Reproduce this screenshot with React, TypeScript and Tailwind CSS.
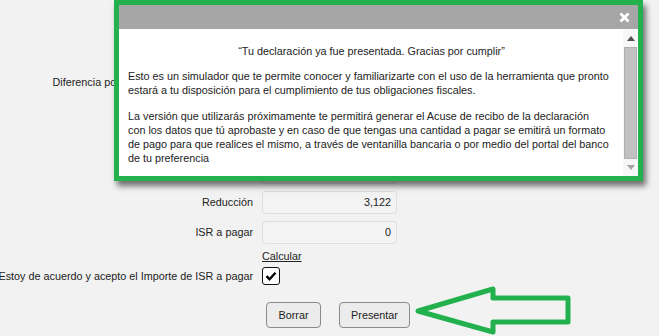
import React from "react";

const rows = [
  { id: "dif", label: "Diferencia por pagar del ejercicio anterior:", value: "" },
  { id: "r2", label: "", value: "" },
  { id: "r3", label: "", value: "" },
  { id: "r4", label: "", value: "" },
  { id: "red", label: "Reducción", value: "3,122" },
  { id: "isr", label: "ISR a pagar", value: "0" },
];

export default function App() {
  return (
    <div
      className="relative w-[659px] h-[336px] overflow-hidden bg-[#f2f2f2] text-[10.8px] text-[#222]"
      style={{ fontFamily: '"Liberation Sans", Arial, sans-serif' }}
    >
      {/* Form */}
      <div className="pt-[71px] grid grid-cols-[253px_auto] gap-x-[9px] gap-y-[7px] w-fit">
        {rows.map((r) => (
          <React.Fragment key={r.id}>
            <div className="flex items-center justify-end h-[23px] whitespace-nowrap">{r.label}</div>
            <div className="w-[135px] h-[23px] rounded-[3px] border border-[#dedede] bg-[#f3f3f3] flex items-center justify-end pr-[5px]">
              {r.value}
            </div>
          </React.Fragment>
        ))}
        <div />
        <div className="mt-[-2px] h-[14px] leading-[14px] underline">Calcular</div>
        <div className="flex items-center justify-end h-[18px] whitespace-nowrap mt-[-3px]">
          Estoy de acuerdo y acepto el Importe de ISR a pagar
        </div>
        <div className="mt-[-3px] w-[18px] h-[18px] rounded-[3px] border-[1.5px] border-[#111] bg-white flex items-center justify-center">
          <svg width="12" height="10" viewBox="0 0 12 10">
            <path d="M1.5 5.2 L4.5 8.2 L10.5 1.8" fill="none" stroke="#000" strokeWidth="2.4" />
          </svg>
        </div>
        <div />
        <div className="mt-[10px] ml-[4px] flex gap-[18px]">
          <button className="w-[55px] h-[26px] rounded-[4px] border border-[#8a8a8a] bg-[#ececec] text-[10.8px] text-[#222]">
            Borrar
          </button>
          <button className="w-[71px] h-[26px] rounded-[4px] border border-[#8a8a8a] bg-[#ececec] text-[10.8px] text-[#222]">
            Presentar
          </button>
        </div>
      </div>

      {/* Green arrow annotation */}
      <svg className="absolute left-[410px] top-[284px]" width="170" height="52" viewBox="0 0 170 52">
        <path
          d="M8 27 L83 5 L83 14 L158 14 L158 38 L83 38 L83 48 Z"
          fill="none"
          stroke="#22b14c"
          strokeWidth="5"
          strokeLinejoin="round"
        />
      </svg>

      {/* Modal */}
      <div className="absolute left-[114px] top-0 w-[529px] h-[181px] border-[5px] border-[#22b14c] bg-white shadow-[3px_5px_6px_rgba(0,0,0,0.55)] flex flex-col">
        <div className="h-[24px] bg-[#a6a6a6] flex items-center justify-end pr-[8px] shrink-0">
          <svg width="11" height="11" viewBox="0 0 11 11">
            <path d="M1.5 1.5 L9.5 9.5 M9.5 1.5 L1.5 9.5" stroke="#fff" strokeWidth="2.8" strokeLinecap="butt" />
          </svg>
        </div>
        <div className="flex flex-1 min-h-0">
          <div className="flex-1 pl-[9px] pr-[8px] pt-[15px] leading-[14px] text-[10.8px] text-[#222]">
            <p className="text-center">“Tu declaración ya fue presentada. Gracias por cumplir”</p>
            <p className="mt-[11px]">
              Esto es un simulador que te permite conocer y familiarizarte con el uso de la herramienta que pronto
              <br />
              estará a tu disposición para el cumplimiento de tus obligaciones fiscales.
            </p>
            <p className="mt-[12px]">
              La versión que utilizarás próximamente te permitirá generar el Acuse de recibo de la declaración
              <br />
              con los datos que tú aprobaste y en caso de que tengas una cantidad a pagar se emitirá un formato
              <br />
              de pago para que realices el mismo, a través de ventanilla bancaria o por medio del portal del banco
              <br />
              de tu preferencia
            </p>
          </div>
          <div className="w-[15px] bg-[#f7f7f7] flex flex-col items-center">
            <div className="h-[18px] flex items-center justify-center">
              <svg width="8" height="5" viewBox="0 0 8 5">
                <path d="M0 5 L4 0 L8 5 Z" fill="#505050" />
              </svg>
            </div>
            <div className="w-[13px] flex-1 bg-[#c1c1c1] border border-[#b0b0b0]" />
            <div className="h-[17px] flex items-center justify-center">
              <svg width="8" height="5" viewBox="0 0 8 5">
                <path d="M0 0 L8 0 L4 5 Z" fill="#a3a3a3" />
              </svg>
            </div>
          </div>
        </div>
      </div>
    </div>
  );
}
